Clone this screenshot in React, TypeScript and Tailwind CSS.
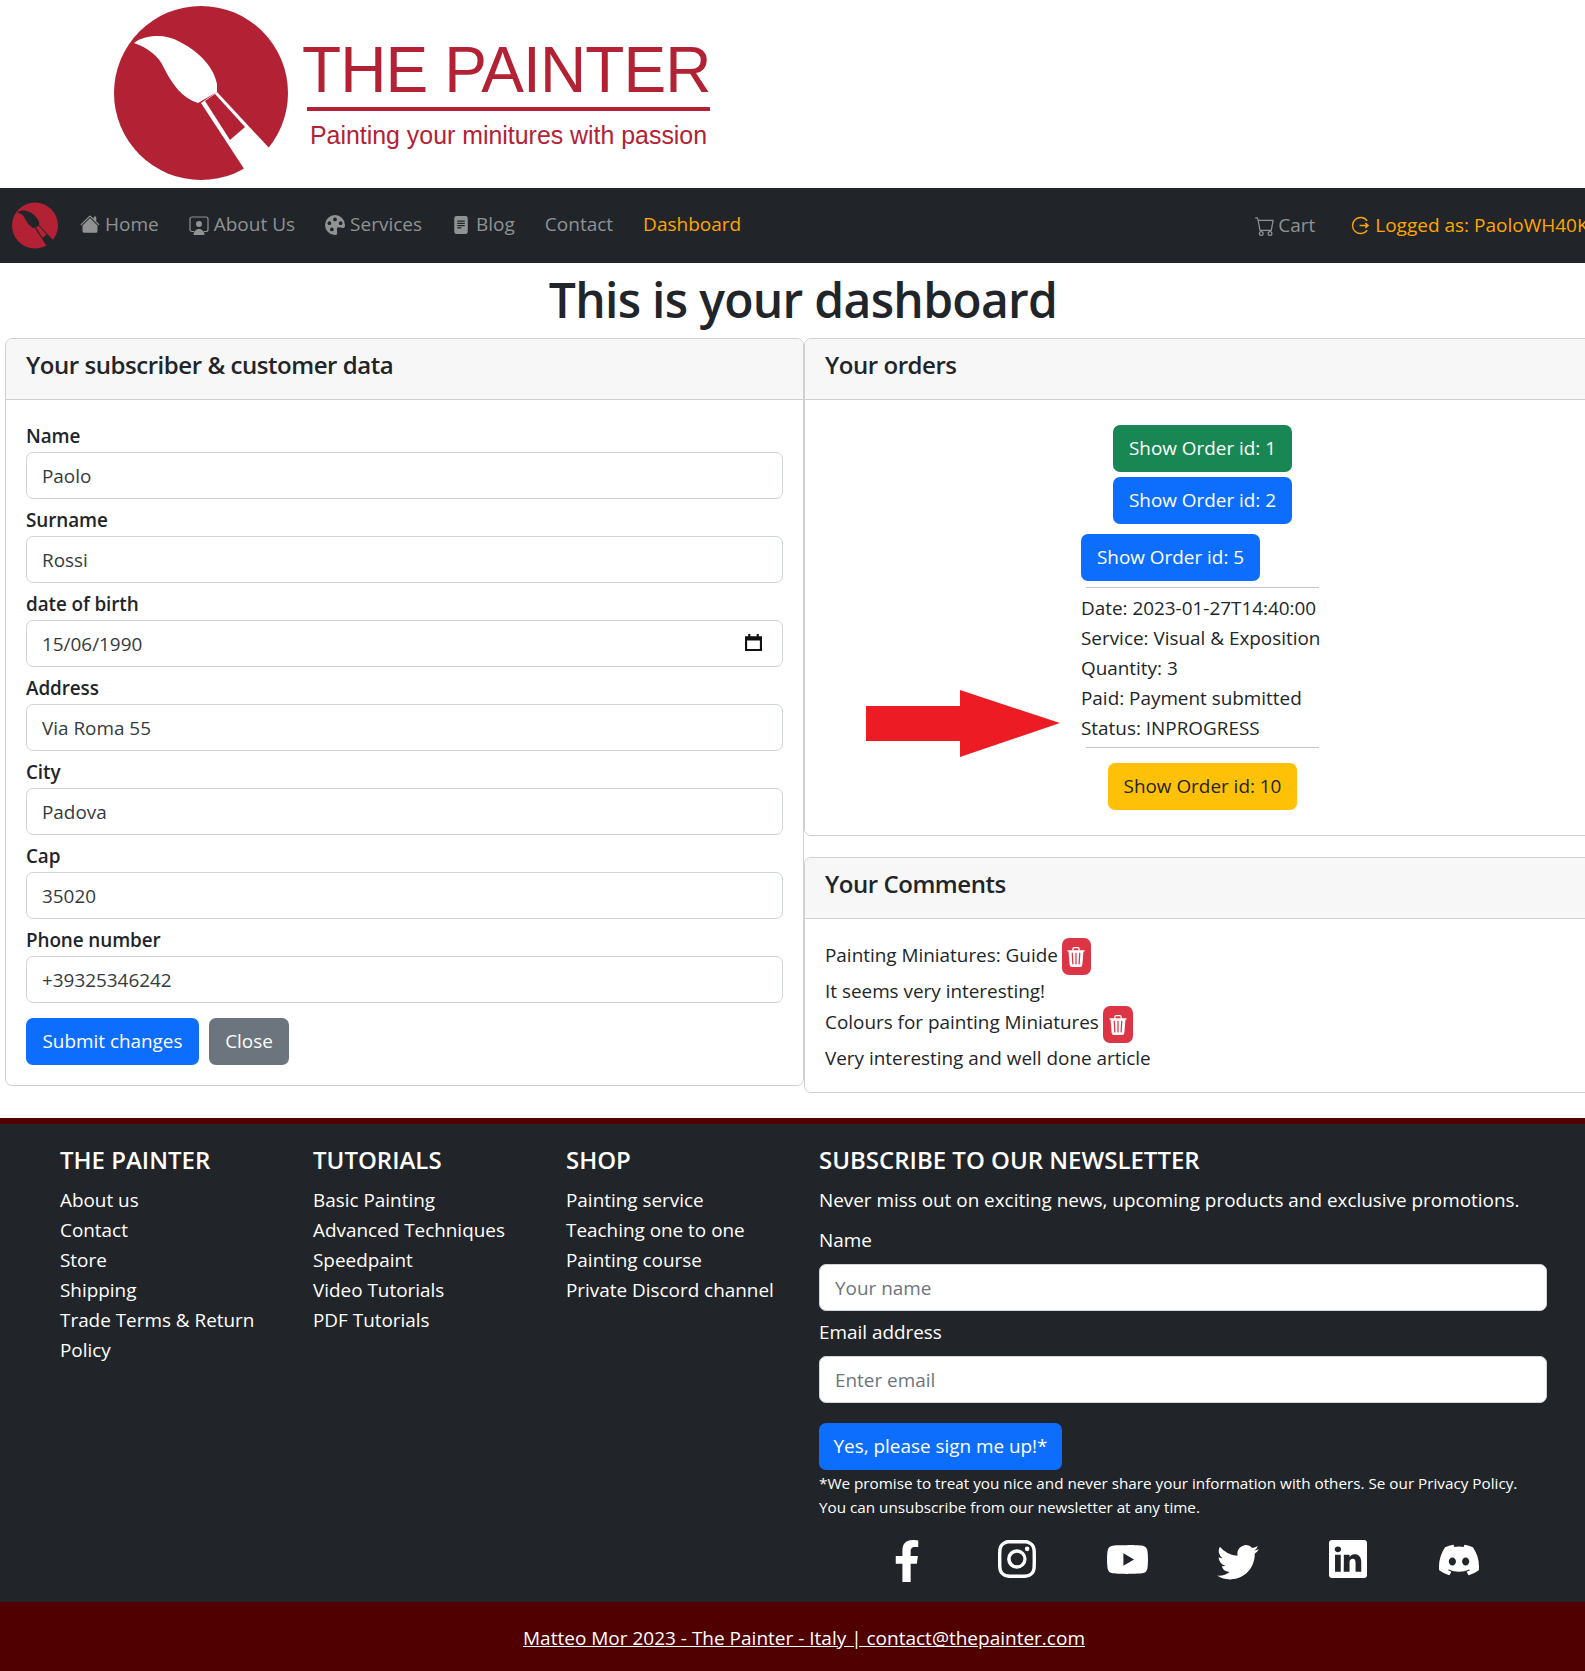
import React from 'react'
import { BsCart, BsDiscord, BsFileTextFill, BsHouseFill, BsInstagram, BsLinkedin, BsPaletteFill, BsTrash3Fill, BsTwitter, BsYoutube } from 'react-icons/bs'
import { FaFacebookF } from 'react-icons/fa'

const font = "font-['Open_Sans',sans-serif]"

const Brush = ({ className, color }: { className: string; color: string }) => (
  <svg viewBox="0 0 174 174" className={className}>
    <circle cx="87" cy="87" r="87" fill="#b22234" />
    <path d="M20 37 C32 28 52 28 66 36 C86 46 100 62 103 78 L103 86 L84 97 C68 92 58 78 50 62 C45 50 34 42 20 37 Z" fill={color} />
    <path d="M87 97 L103 86 L170 158 L150 190 L140 178 Z" fill={color} />
    <path d="M91 95 L101 88 L131 121 L116 134 Z" fill="#b22234" />
  </svg>
)

const Logo = () => (
  <header className="h-[188px] pl-[114px] flex bg-white font-['Liberation_Sans',sans-serif] text-[#b22234]">
    <Brush className="w-[174px] h-[174px] mt-[6px] shrink-0" color="#ffffff" />
    <div className="ml-[14px]">
      <div className="text-[64px] leading-[64px] tracking-[-0.9px] mt-[38px] whitespace-nowrap">THE PAINTER</div>
      <div className="h-[4px] bg-[#b22234] ml-[5px] w-[403px] mt-[5px]" />
      <div className="text-[24.9px] leading-[32px] ml-[8px] mt-[8px] whitespace-nowrap">Painting your minitures with passion</div>
    </div>
  </header>
)

const AboutIcon = () => (
  <svg viewBox="0 0 20 20" className="w-[20px] h-[20px] mr-[5px]" fill="currentColor">
    <path d="M5 16.5H3a2 2 0 0 1-2-2V4a2 2 0 0 1 2-2h14a2 2 0 0 1 2 2v10.500a2 2 0 0 1-2 2h-2" fill="none" stroke="currentColor" strokeWidth="1.200" />
    <circle cx="10" cy="9" r="3" />
    <path d="M4.500 20c0-3.500 2.500-6 5.500-6s5.500 2.500 5.500 6z" />
  </svg>
)

const links = [
  { icon: <BsHouseFill className="w-[20px] h-[20px] mr-[5px] -mt-[2px]" />, label: 'Home' },
  { icon: <AboutIcon />, label: 'About Us' },
  { icon: <BsPaletteFill className="w-[20px] h-[20px] mr-[5px]" />, label: 'Services' },
  { icon: <BsFileTextFill className="w-[18px] h-[20px] mr-[6px]" />, label: 'Blog' },
  { icon: null, label: 'Contact' },
]

const Navbar = () => (
  <nav className="h-[75px] bg-[#212529] flex items-center overflow-hidden whitespace-nowrap text-[19px] text-[#909294]">
    <Brush className="w-[46px] h-[47px] ml-[12px] mr-[7px] shrink-0" color="#212529" />
    {links.map((l) => (
      <a key={l.label} className="flex items-center px-[15px] -mt-[2px]">{l.icon}{l.label}</a>
    ))}
    <a className="px-[15px] -mt-[2px] text-[#ffa500]">Dashboard</a>
    <div className="flex items-center shrink-0 ml-[499px]">
      <a className="flex items-center"><BsCart className="w-[20px] h-[20px] mr-[3px]" />Cart</a>
      <a className="flex items-center ml-[36px] text-[#ffa500]">
        <svg viewBox="0 0 20 20" className="w-[19px] h-[19px] mr-[5px]" fill="none" stroke="currentColor" strokeWidth="1.5">
          <path d="M17 5 A8.5 8.5 0 1 0 17 15" />
          <path d="M9 10 H18 M15 7.5 L18 10 L15 12.5" />
        </svg>
        Logged as: PaoloWH40K
      </a>
    </div>
  </nav>
)

const inputClass = 'w-full h-[47px] px-[15px] rounded-[7px] border border-[#ced4da] bg-white text-[#343a40] outline-none placeholder:text-[#6c757d]'

const Field = ({ label, value, calendar }: { label: string; value: string; calendar?: boolean }) => (
  <div className="mb-[6px]">
    <label className="block h-[31px] leading-[30px] font-[600] tracking-[-0.1px]">{label}</label>
    <div className="relative">
      <input className={inputClass} defaultValue={value} readOnly />
      {calendar && (
        <svg viewBox="0 0 16 16" className="absolute right-[21px] top-[14px] w-[17px] h-[17px]" fill="#111">
          <path d="M3 0h2v2h6V0h2v2h3v14H0V2h3V0zM2 6v8h12V6H2z" />
        </svg>
      )}
    </div>
  </div>
)

const Card = ({ title, children, className }: { title: string; children: React.ReactNode; className?: string }) => (
  <section className={`border border-[#d0d0d0] rounded-[7px] bg-white ${className ?? ''}`}>
    <h4 className="h-[61px] px-[20px] bg-[#f7f7f7] border-b border-[#d0d0d0] rounded-t-[7px] text-[24px] leading-[51px] font-[600] tracking-[-0.45px]">{title}</h4>
    {children}
  </section>
)

const orderBtn = 'block h-[47px] w-fit px-[16px] rounded-[7px] whitespace-nowrap'

const CustomerCard = () => (
  <Card title="Your subscriber & customer data" className="w-[799px] h-[748px] shrink-0">
    <form className="px-[20px] pt-[21px]">
      <Field label="Name" value="Paolo" />
      <Field label="Surname" value="Rossi" />
      <Field label="date of birth" value="15/06/1990" calendar />
      <Field label="Address" value="Via Roma 55" />
      <Field label="City" value="Padova" />
      <Field label="Cap" value="35020" />
      <Field label="Phone number" value="+39325346242" />
      <div className="flex gap-[10px] mt-[15px]">
        <button type="button" className={`${orderBtn} !w-[173px] !px-0 bg-[#0d6efd] text-white`}>Submit changes</button>
        <button type="button" className={`${orderBtn} !w-[80px] !px-0 bg-[#6c757d] text-white`}>Close</button>
      </div>
    </form>
  </Card>
)

const OrdersCard = () => (
  <Card title="Your orders" className="relative h-[498px]">
    <div className="flex flex-col items-center pt-[25px] pr-[2px]">
      <button className={`${orderBtn} bg-[#198754] text-white`}>Show Order id: 1</button>
      <button className={`${orderBtn} bg-[#0d6efd] text-white mt-[5px]`}>Show Order id: 2</button>
      <div className="w-[243px] mt-[10px]">
        <button className={`${orderBtn} bg-[#0d6efd] text-white`}>Show Order id: 5</button>
        <div className="h-px bg-[#c4c4c4] mx-[5px] mt-[6px] mb-[5px]" />
        {['Date: 2023-01-27T14:40:00', 'Service: Visual & Exposition', 'Quantity: 3', 'Paid: Payment submitted', 'Status: INPROGRESS'].map((t) => (
          <p key={t} className="h-[30px] leading-[30px] whitespace-nowrap">{t}</p>
        ))}
        <div className="h-px bg-[#c4c4c4] mx-[5px] mt-[4px]" />
      </div>
      <button className={`${orderBtn} bg-[#ffc107] text-[#212529] mt-[15px]`}>Show Order id: 10</button>
    </div>
    {/*red arrow*/}
    <svg viewBox="0 0 194 67" className="absolute left-[61px] top-[351px] w-[194px] h-[67px]">
      <path d="M0 16H94V0L194 33L94 67V51H0Z" fill="#ed1c24" />
    </svg>
  </Card>
)

const TrashBtn = ({ w }: { w: string }) => (
  <button className={`${w} h-[37px] ml-[4px] rounded-[7px] bg-[#dc3545] text-white flex items-center justify-center`}>
    <BsTrash3Fill className="w-[20px] h-[20px]" />
  </button>
)

const CommentsCard = () => (
  <Card title="Your Comments" className="h-[236px] mt-[21px]">
    <div className="px-[20px] pt-[19px] leading-[30px]">
      <div className="flex items-center h-[37px]"><span className="pb-[4px]">Painting Miniatures: Guide</span><TrashBtn w="w-[29px]" /></div>
      <p className="h-[30px] mt-px">It seems very interesting!</p>
      <div className="flex items-center h-[37px]"><span className="pb-[5px]">Colours for painting Miniatures</span><TrashBtn w="w-[30px]" /></div>
      <p className="h-[30px]">Very interesting and well done article</p>
    </div>
  </Card>
)

const columns = [
  { title: 'THE PAINTER', items: ['About us', 'Contact', 'Store', 'Shipping', 'Trade Terms & Return Policy'] },
  { title: 'TUTORIALS', items: ['Basic Painting', 'Advanced Techniques', 'Speedpaint', 'Video Tutorials', 'PDF Tutorials'] },
  { title: 'SHOP', items: ['Painting service', 'Teaching one to one', 'Painting course', 'Private Discord channel'] },
]

const socials = [
  <FaFacebookF className="w-[40px] h-[42px]" />,
  <BsInstagram className="w-[38px] h-[38px]" />,
  <BsYoutube className="w-[41px] h-[41px]" />,
  <BsTwitter className="w-[42px] h-[42px]" />,
  <BsLinkedin className="w-[38px] h-[38px]" />,
  <BsDiscord className="w-[40px] h-[40px]" />,
]

const Footer = () => (
  <footer className="text-white">
    <div className="h-[484px] bg-[#212529] border-t-[6px] border-[#500000] pl-[60px] pt-[18px] grid grid-cols-[253px_253px_253px_728px]">
      {columns.map((c) => (
        <div key={c.title} className="pr-[30px]">
          <h5 className="text-[24px] leading-[36px] font-[600] mb-[7px] whitespace-nowrap">{c.title}</h5>
          <ul className="leading-[30px]">
            {c.items.map((i) => <li key={i}>{i}</li>)}
          </ul>
        </div>
      ))}
      <div>
        <h5 className="text-[24px] leading-[36px] font-[600] mb-[7px] whitespace-nowrap">SUBSCRIBE TO OUR NEWSLETTER</h5>
        <p className="leading-[30px] whitespace-nowrap">Never miss out on exciting news, upcoming products and exclusive promotions.</p>
        <label className="block leading-[30px] mt-[10px] mb-[9px]">Name</label>
        <input className={inputClass} placeholder="Your name" />
        <label className="block leading-[30px] mt-[6px] mb-[9px]">Email address</label>
        <input className={inputClass} placeholder="Enter email" />
        <button className={`${orderBtn} !w-[243px] !px-0 bg-[#0d6efd] text-white mt-[20px]`}>Yes, please sign me up!*</button>
        <p className="text-[15.25px] leading-[24px] mt-[1px] whitespace-nowrap">
          *We promise to treat you nice and never share your information with others. Se our Privacy Policy.<br />
          You can unsubscribe from our newsletter at any time.
        </p>
        <div className="flex ml-[33px] mt-[21px]">
          {socials.map((s, i) => <a key={i} className="w-[110.3px] flex justify-center">{s}</a>)}
        </div>
      </div>
    </div>
    <div className="h-[69px] bg-[#500000] flex items-center justify-center pl-[23px] pt-[4px] text-[19px] underline">
      Matteo Mor 2023 - The Painter - Italy | contact@thepainter.com
    </div>
  </footer>
)

const App = () => {
  return (
    <div className={`${font} w-[1585px] overflow-hidden text-[18.9px] text-[#212529] bg-white`}>
      <Logo />
      <Navbar />
      <main className="w-[1606px] h-[855px]">
        <h1 className="h-[75px] text-center text-[48px] leading-[73px] font-[600] tracking-[-0.7px]">This is your dashboard</h1>
        <div className="flex items-start pl-[5px]">
          <CustomerCard />
          <div className="w-[799px] shrink-0">
            <OrdersCard />
            <CommentsCard />
          </div>
        </div>
      </main>
      <Footer />
    </div>
  )
}

export default App
